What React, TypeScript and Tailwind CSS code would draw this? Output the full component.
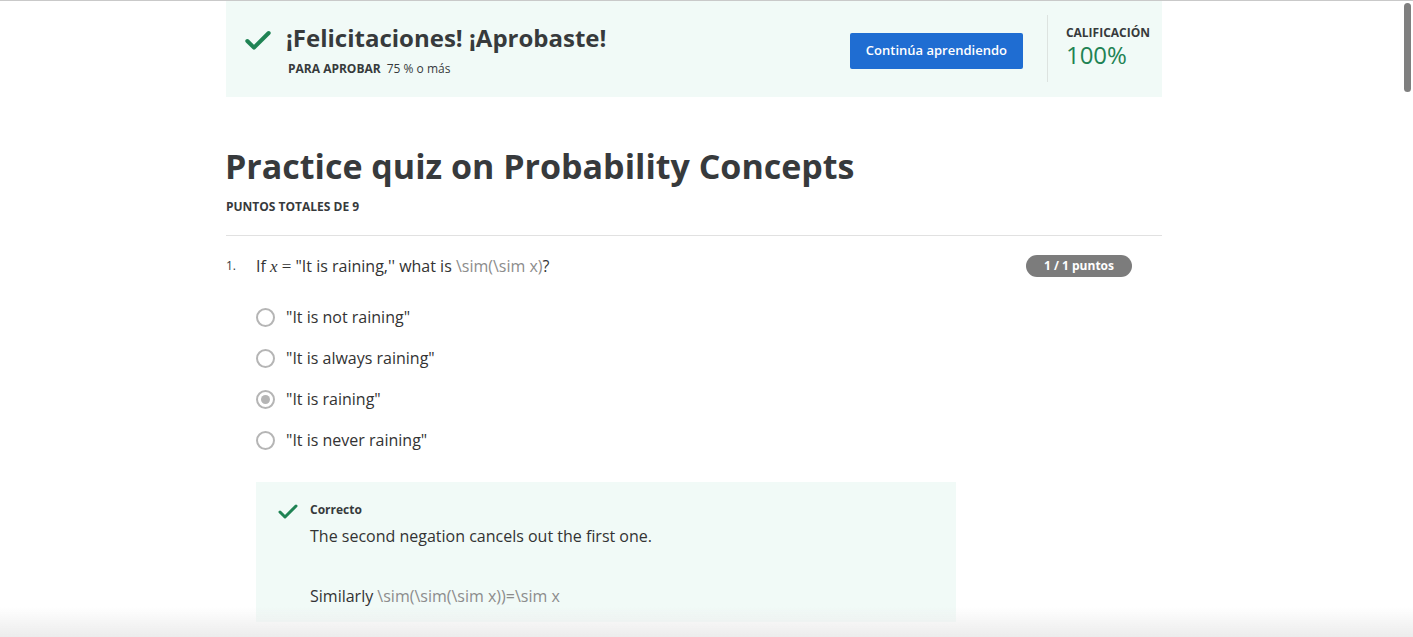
import { Check } from "lucide-react";

const options = [
  { label: '"It is not raining"', checked: false },
  { label: '"It is always raining"', checked: false },
  { label: '"It is raining"', checked: true },
  { label: '"It is never raining"', checked: false },
];

function Radio({ checked }: { checked: boolean }) {
  return (
    <span className="w-[19px] h-[19px] rounded-full border-2 border-[#b5b5b5] flex items-center justify-center bg-white shrink-0">
      {checked && <span className="w-[9px] h-[9px] rounded-full bg-[#b5b5b5]" />}
    </span>
  );
}

export default function App() {
  return (
    <div
      className="min-h-[637px] bg-white border-t border-[#c9c9c9] text-[#373a3c] relative overflow-hidden"
      style={{ fontFamily: '"Open Sans", sans-serif' }}
    >
      <div className="w-[936px] ml-[226px]">
        {/* Banner */}
        <div className="bg-[#f1faf7] h-[96px] flex items-center pl-[16px] pr-[12px]">
          <Check size={32} strokeWidth={3} className="text-[#1f8354] mb-[16px]" />
          <div className="ml-[12px] flex-1 mt-[2px]">
            <h2 className="text-[24px] font-bold leading-[30px] text-[#373a3c]">¡Felicitaciones! ¡Aprobaste!</h2>
            <div className="mt-[8px] text-[12px] leading-[16px] ml-[2px]">
              <span className="font-bold">PARA APROBAR</span>
              <span className="ml-[6px]">75 % o más</span>
            </div>
          </div>
          <button className="w-[173px] h-[36px] rounded-[2px] bg-[#1f6dd2] text-white text-[13px] font-semibold mt-[3px]">
            Continúa aprendiendo
          </button>
          <div className="w-px h-[67px] bg-[#dde3e0] ml-[24px] mb-[2px]" />
          <div className="ml-[18px] mb-[4px]">
            <div className="text-[12px] font-bold leading-[16px]">CALIFICACIÓN</div>
            <div className="text-[24px] leading-[28px] text-[#1f8354]">100%</div>
          </div>
        </div>

        {/* Heading */}
        <h1 className="mt-[46px] text-[34px] font-bold leading-[46px] text-[#373a3c] -ml-[1px]">
          Practice quiz on Probability Concepts
        </h1>
        <div className="mt-[10px] text-[12px] font-bold leading-[16px]">PUNTOS TOTALES DE 9</div>
        <div className="mt-[20px] h-px bg-[#e1e1e1]" />

        {/* Question */}
        <div className="mt-[18px] flex">
          <div className="w-[30px] text-[12px] leading-[22px] pt-[1px]">1.</div>
          <div className="flex-1">
            <div className="flex items-start justify-between">
              <p className="text-[16px] leading-[24px] text-[#333]">
                If <span className="italic text-[17px]" style={{ fontFamily: '"Liberation Serif", serif' }}>x</span>{" "}
                <span className="text-[17px]" style={{ fontFamily: '"Liberation Serif", serif' }}>=</span> "It is raining,''
                what is <span className="text-[#8c8c8c]">\sim(\sim x)</span>?
              </p>
              <span className="mr-[30px] mt-[1px] h-[22px] px-[18px] rounded-full bg-[#7c7c7c] text-white text-[12px] font-bold flex items-center">
                1 / 1 puntos
              </span>
            </div>

            <div className="mt-[26px] flex flex-col gap-[17px]">
              {options.map((o) => (
                <label key={o.label} className="flex items-center gap-[11px] h-[24px]">
                  <Radio checked={o.checked} />
                  <span className="text-[16px] text-[#333]">{o.label}</span>
                </label>
              ))}
            </div>

            {/* Feedback */}
            <div className="mt-[30px] w-[700px] bg-[#f1faf7] pt-[17px] pb-[14px] pl-[20px] flex">
              <Check size={24} strokeWidth={3} className="text-[#1f8354] mt-[1px]" />
              <div className="ml-[10px]">
                <div className="text-[12px] font-bold leading-[22px]">Correcto</div>
                <p className="text-[16px] leading-[24px] text-[#333] mt-[3px]">The second negation cancels out the first one.</p>
                <p className="text-[16px] leading-[24px] text-[#333] mt-[36px]">
                  Similarly <span className="text-[#8c8c8c]">\sim(\sim(\sim x))=\sim x</span>
                </p>
              </div>
            </div>
          </div>
        </div>
      </div>

      {/* bottom fade */}
      <div className="fixed left-0 right-0 bottom-0 h-[30px] bg-gradient-to-b from-white/0 to-[#ececec] pointer-events-none" />
      {/* scrollbar */}
      <div className="fixed right-[2px] top-[3px] w-[7px] h-[89px] rounded-full bg-[#7f7f7f]" />
    </div>
  );
}
